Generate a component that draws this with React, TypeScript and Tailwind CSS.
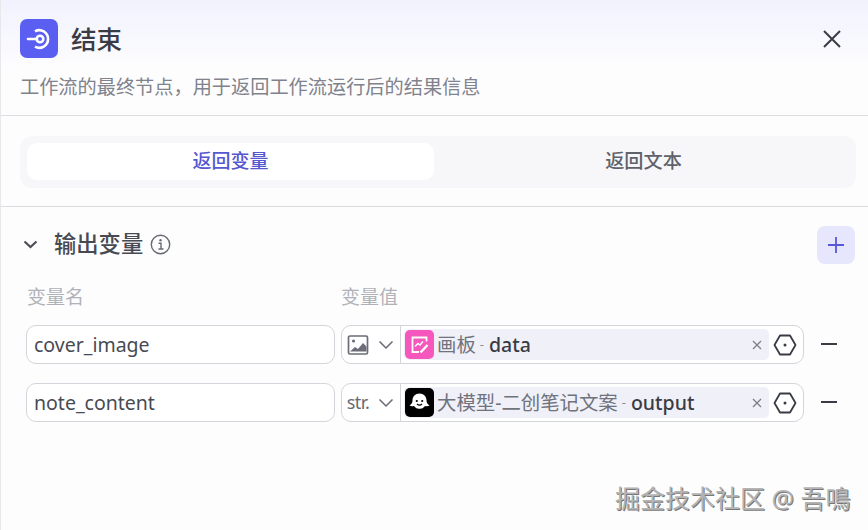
import React from "react";

const FONT = '"Noto Sans", "Noto Sans CJK SC", sans-serif';

function HexIcon() {
  return (
    <svg width="24" height="24" viewBox="0 0 24 24" fill="none" className="shrink-0">
      <path d="M7 2.500h10L22.500 12 17 21.500H7L1.500 12z" stroke="#3a3c45" strokeWidth="1.800" strokeLinejoin="round" />
      <circle cx="12" cy="12" r="1.500" fill="#3a3c45" />
    </svg>
  );
}

function ImageIcon() {
  return (
    <svg width="22" height="22" viewBox="0 0 22 22" fill="none">
      <rect x="1.500" y="2" width="19" height="18" rx="1.500" stroke="#6b6e78" strokeWidth="1.700" />
      <circle cx="6.500" cy="7" r="1.600" fill="#6b6e78" />
      <path d="M3 17.500l5-4.500 3 2 5-6 3.500 3.500v5z" fill="#6b6e78" />
    </svg>
  );
}

function Chevron() {
  return (
    <svg width="16" height="10" viewBox="0 0 16 10" fill="none" className="shrink-0">
      <path d="M1.500 1.500L8 8l6.500-6.500" stroke="#676a74" strokeWidth="1.500" />
    </svg>
  );
}

function BoardIcon() {
  return (
    <div className="w-[29px] h-[29px] rounded-[5px] bg-[#f557bd] flex items-center justify-center shrink-0">
      <svg width="20" height="20" viewBox="0 0 20 20" fill="none">
        <path d="M16.500 6.500V2.500h-14v14.500H9" stroke="white" strokeWidth="1.800" />
        <path d="M5 11.500l3-3 2 1.500 3-3.500" stroke="white" strokeWidth="1.500" />
        <path d="M10.500 17.500l7-7.500" stroke="white" strokeWidth="2.400" />
      </svg>
    </div>
  );
}

function GhostIcon() {
  return (
    <div className="w-[29px] h-[29px] rounded-[5px] bg-black flex items-center justify-center shrink-0">
      <svg width="25" height="25" viewBox="0 0 25 25" fill="none">
        <path d="M12.500 3.500c-4.200 0-7 3-7 6.800 0 2.500-1 4-3 5 1 1 2.800 1.200 4.300.7 1 .3 1.500 1.800 2.700 2.300 1 .5 2 .4 3 .4s2 .1 3-.4c1.200-.5 1.700-2 2.700-2.300 1.500.5 3.300.3 4.300-.7-2-1-3-2.500-3-5 0-3.800-2.800-6.800-7-6.800z" fill="white" />
        <circle cx="9.800" cy="11" r="1.100" fill="black" />
        <circle cx="15.200" cy="11" r="1.100" fill="black" />
        <path d="M10 14c1.500 1.300 3.500 1.300 5 0" stroke="black" strokeWidth="1.200" />
      </svg>
    </div>
  );
}

function Row({
  name,
  type,
  icon,
  node,
  value,
}: {
  name: string;
  type: React.ReactNode;
  icon: React.ReactNode;
  node: string;
  value: string;
}) {
  return (
    <div className="flex items-center h-[39px]">
      <div className="w-[309px] h-full rounded-[10px] border border-[#d4d5da] bg-white flex items-center pl-[7px] text-[19.500px] text-[#484a53]">
        {name}
      </div>
      <div className="ml-[6px] w-[463px] h-full rounded-[10px] border border-[#d4d5da] bg-white flex items-center">
        <div className="w-[59px] h-full shrink-0 border-r border-[#d4d5da] flex items-center pl-[5px] gap-[9px]">
          <div className="w-[22px] flex items-center justify-center">{type}</div>
          <Chevron />
        </div>
        <div className="ml-[3px] w-[365px] h-[31px] rounded-[5px] bg-[#eff0f8] flex items-center pl-[1px] shrink-0">
          {icon}
          <span className="ml-[3px] text-[19.400px] text-[#70727c]">{node}</span>
          <span className="ml-[4px] text-[13px] text-[#8a8c95]">-</span>
          <span className="ml-[5px] text-[19.500px] font-medium text-[#3a3c45]">{value}</span>
          <svg width="10" height="10" viewBox="0 0 10 10" className="ml-auto mr-[7px]" fill="none">
            <path d="M1 1l8 8M9 1l-8 8" stroke="#7d7f88" strokeWidth="1.300" />
          </svg>
        </div>
        <div className="ml-[4px]">
          <HexIcon />
        </div>
      </div>
      <svg width="16" height="2" viewBox="0 0 16 2" className="ml-[17px] -translate-y-px">
        <rect width="16" height="2" fill="#3a3c45" />
      </svg>
    </div>
  );
}

export default function App() {
  return (
    <div
      className="relative w-[868px] h-[530px] overflow-hidden bg-[#fdfdfe] border-l border-[#e8e8ec]"
      style={{ fontFamily: FONT }}
    >
      <div className="h-[116px] border-b border-[#dcdde1] bg-gradient-to-b from-[#f1f2fd] to-[#fdfdfe] to-60% px-[19px] pt-[19px]">
        <div className="flex items-center h-[39px]">
          <div className="w-[38px] h-[39px] rounded-[7px] bg-[#5a5ff2] flex items-center justify-center">
            <svg width="28" height="28" viewBox="0 0 28 28" fill="none">
              <path d="M10 6.300a8.800 8.800 0 1 1 0 15.400" stroke="white" strokeWidth="2.600" />
              <circle cx="15" cy="14" r="3.300" stroke="white" strokeWidth="2.600" />
              <path d="M3 14h9" stroke="white" strokeWidth="2.600" strokeLinecap="round" />
            </svg>
          </div>
          <div className="ml-[13px] text-[25.500px] font-medium text-[#3a3c45] translate-y-px">结束</div>
          <svg width="18" height="18" viewBox="0 0 18 18" fill="none" className="ml-auto mr-[8px]">
            <path d="M1 1l16 16M17 1L1 17" stroke="#3a3c45" strokeWidth="2" />
          </svg>
        </div>
        <div className="mt-[15px] text-[19.200px] leading-[28px] text-[#80828c]">
          工作流的最终节点，用于返回工作流运行后的结果信息
        </div>
      </div>

      <div className="h-[91px] border-b border-[#dcdde1] pt-[20px] pl-[19px]">
        <div className="w-[836px] h-[52px] rounded-[12px] bg-[#f7f7f9] p-[7px] flex">
          <div className="w-[407px] h-[37px] rounded-[10px] bg-white flex items-center justify-center text-[19px] font-medium text-[#5558d0]">
            返回变量
          </div>
          <div className="flex-1 h-[37px] flex items-center justify-center pl-[4px] text-[19.200px] font-medium text-[#60626b]">
            返回文本
          </div>
        </div>
      </div>

      <div className="pl-[25px] pt-[19px]">
        <div className="flex items-center h-[38px] -ml-[3px]">
          <svg width="15" height="10" viewBox="0 0 15 10" fill="none">
            <path d="M1.500 1.500L7.500 7l6-5.500" stroke="#4d4f58" strokeWidth="2.200" />
          </svg>
          <div className="ml-[16px] text-[22.300px] font-medium text-[#484a53] -translate-y-px">输出变量</div>
          <svg width="21" height="21" viewBox="0 0 21 21" fill="none" className="ml-[7px] -translate-y-px">
            <circle cx="10.500" cy="10.500" r="9.200" stroke="#676a74" strokeWidth="1.400" />
            <circle cx="10.500" cy="6.300" r="1.200" fill="#676a74" />
            <path d="M8.500 9.300h2.500v5.500M8.500 15h5" stroke="#676a74" strokeWidth="1.400" />
          </svg>
          <div className="ml-auto mr-[13px] w-[38px] h-[38px] rounded-[8px] bg-[#e6e7fc] flex items-center justify-center">
            <svg width="16" height="16" viewBox="0 0 16 16" fill="none">
              <path d="M8 0v16M0 8h16" stroke="#5558d8" strokeWidth="1.800" />
            </svg>
          </div>
        </div>
        <div className="flex mt-[19px] h-[28px] items-center text-[19px] text-[#b0b2b9]">
          <div className="w-[315px] pl-[1px]">变量名</div>
          <div>变量值</div>
        </div>
        <div className="mt-[14px] flex flex-col gap-[19px]">
          <Row name="cover_image" type={<ImageIcon />} icon={<BoardIcon />} node="画板" value="data" />
          <Row
            name="note_content"
            type={<span className="text-[18px] text-[#676a74] tracking-[-0.5px]">str.</span>}
            icon={<GhostIcon />}
            node="大模型-二创笔记文案"
            value="output"
          />
        </div>
      </div>

      <div className="absolute left-[614px] top-[483px] text-[25px] leading-[30px] text-[#b4b4b4] whitespace-nowrap [text-shadow:1px_1px_0_#777,-1px_-1px_0_#fff]">
        掘金技术社区 @ 吾鳴
      </div>
    </div>
  );
}
